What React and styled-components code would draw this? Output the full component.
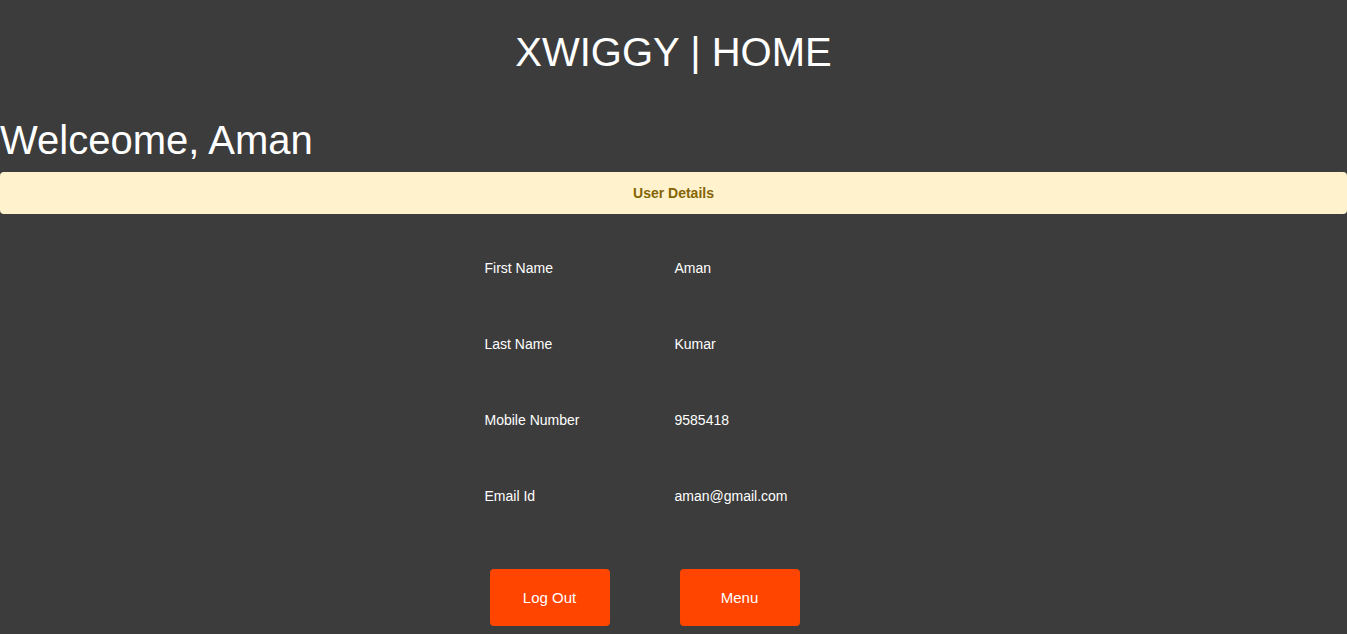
import { Fragment } from "react";
import styled, { createGlobalStyle } from "styled-components";

const GlobalStyle = createGlobalStyle`
  body {
    margin: 0;
    background-color: #3c3c3c;
    font-family: "Liberation Sans", Arial, sans-serif;
    color: #ffffff;
  }
`;

const Page = styled.div`
  min-height: 634px;
  overflow: hidden;
`;

const Title = styled.h1`
  margin: 29px 0 0;
  font-size: 40px;
  font-weight: 400;
  line-height: 46px;
  text-align: center;
`;

const Welcome = styled.h2`
  margin: 42px 0 0;
  font-size: 40px;
  font-weight: 400;
  line-height: 46px;
`;

const Alert = styled.div`
  margin-top: 9px;
  height: 42px;
  display: flex;
  align-items: center;
  justify-content: center;
  background-color: #fff2cd;
  color: #856404;
  font-size: 14px;
  font-weight: 700;
  border-radius: 4px;
`;

const Details = styled.div`
  width: 380px;
  margin: 16px 0 0 calc(50% - 189px);
  display: grid;
  grid-template-columns: 190px 190px;
  grid-auto-rows: 76px;
  align-items: center;
  font-size: 14px;
`;

const Cell = styled.div`
  line-height: 16px;
`;

const Actions = styled.div`
  width: 380px;
  margin: 35px auto 0;
  display: grid;
  grid-template-columns: 190px 190px;
`;

const Button = styled.button`
  margin-left: 6px;
  width: 120px;
  height: 57px;
  border: none;
  border-radius: 4px;
  background-color: #ff4500;
  color: #ffffff;
  font-family: "Liberation Sans", Arial, sans-serif;
  font-size: 15px;
  cursor: pointer;
`;

const user = [
  ["First Name", "Aman"],
  ["Last Name", "Kumar"],
  ["Mobile Number", "9585418"],
  ["Email Id", "aman@gmail.com"],
];

const App = () => {
  return (
    <Page>
      <GlobalStyle />
      <Title>XWIGGY | HOME</Title>
      <Welcome>Welceome, Aman</Welcome>
      <Alert>User Details</Alert>
      <Details>
        {user.map(([label, value]) => (
          <Fragment key={label}>
            <Cell>{label}</Cell>
            <Cell>{value}</Cell>
          </Fragment>
        ))}
      </Details>
      <Actions>
        <div>
          <Button>Log Out</Button>
        </div>
        <div>
          <Button>Menu</Button>
        </div>
      </Actions>
    </Page>
  );
};

export default App;
